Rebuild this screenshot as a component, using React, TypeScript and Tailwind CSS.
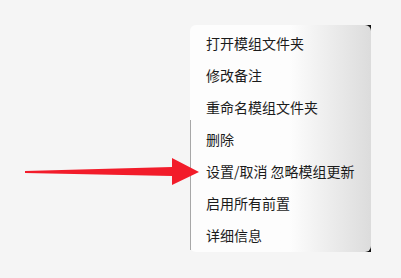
const items = [
  '打开模组文件夹',
  '修改备注',
  '重命名模组文件夹',
  '删除',
  '设置/取消 忽略模组更新',
  '启用所有前置',
  '详细信息',
];

const Arrow = () => (
  <svg className="absolute left-0 top-0" width="401" height="278" viewBox="0 0 401 278">
    <polygon points="25,171 172,167 172,158 199,172 172,185 172,176 25,173" fill="#f21c2a" />
  </svg>
);

const App = () => {
  return (
    <div className="relative w-[401px] h-[278px] overflow-hidden bg-[#f5f5f5] font-['Noto_Sans_CJK_SC',sans-serif]">
      <div className="relative ml-[190px] pt-[25px] w-[181px]">
        <div className="absolute right-0 top-[25px] w-2 h-2 bg-[#111]" />
        <div className="absolute right-0 bottom-0 w-2 h-2 bg-[#111]" />
        <div className="relative h-[227px] rounded-[6px] bg-gradient-to-r from-[#fdfdfd] from-55% to-[#dcdcdc] pt-[2px] flex flex-col">
          <div className="absolute left-0 top-[95px] bottom-[2px] w-px bg-[#a8a8a8]" />
          {items.map((label) => (
            <div key={label} className="h-8 flex items-center pl-4 text-[14px] text-[#1b1b1b] leading-none">
              {label}
            </div>
          ))}
        </div>
      </div>
      <Arrow />
    </div>
  );
};

export default App;
